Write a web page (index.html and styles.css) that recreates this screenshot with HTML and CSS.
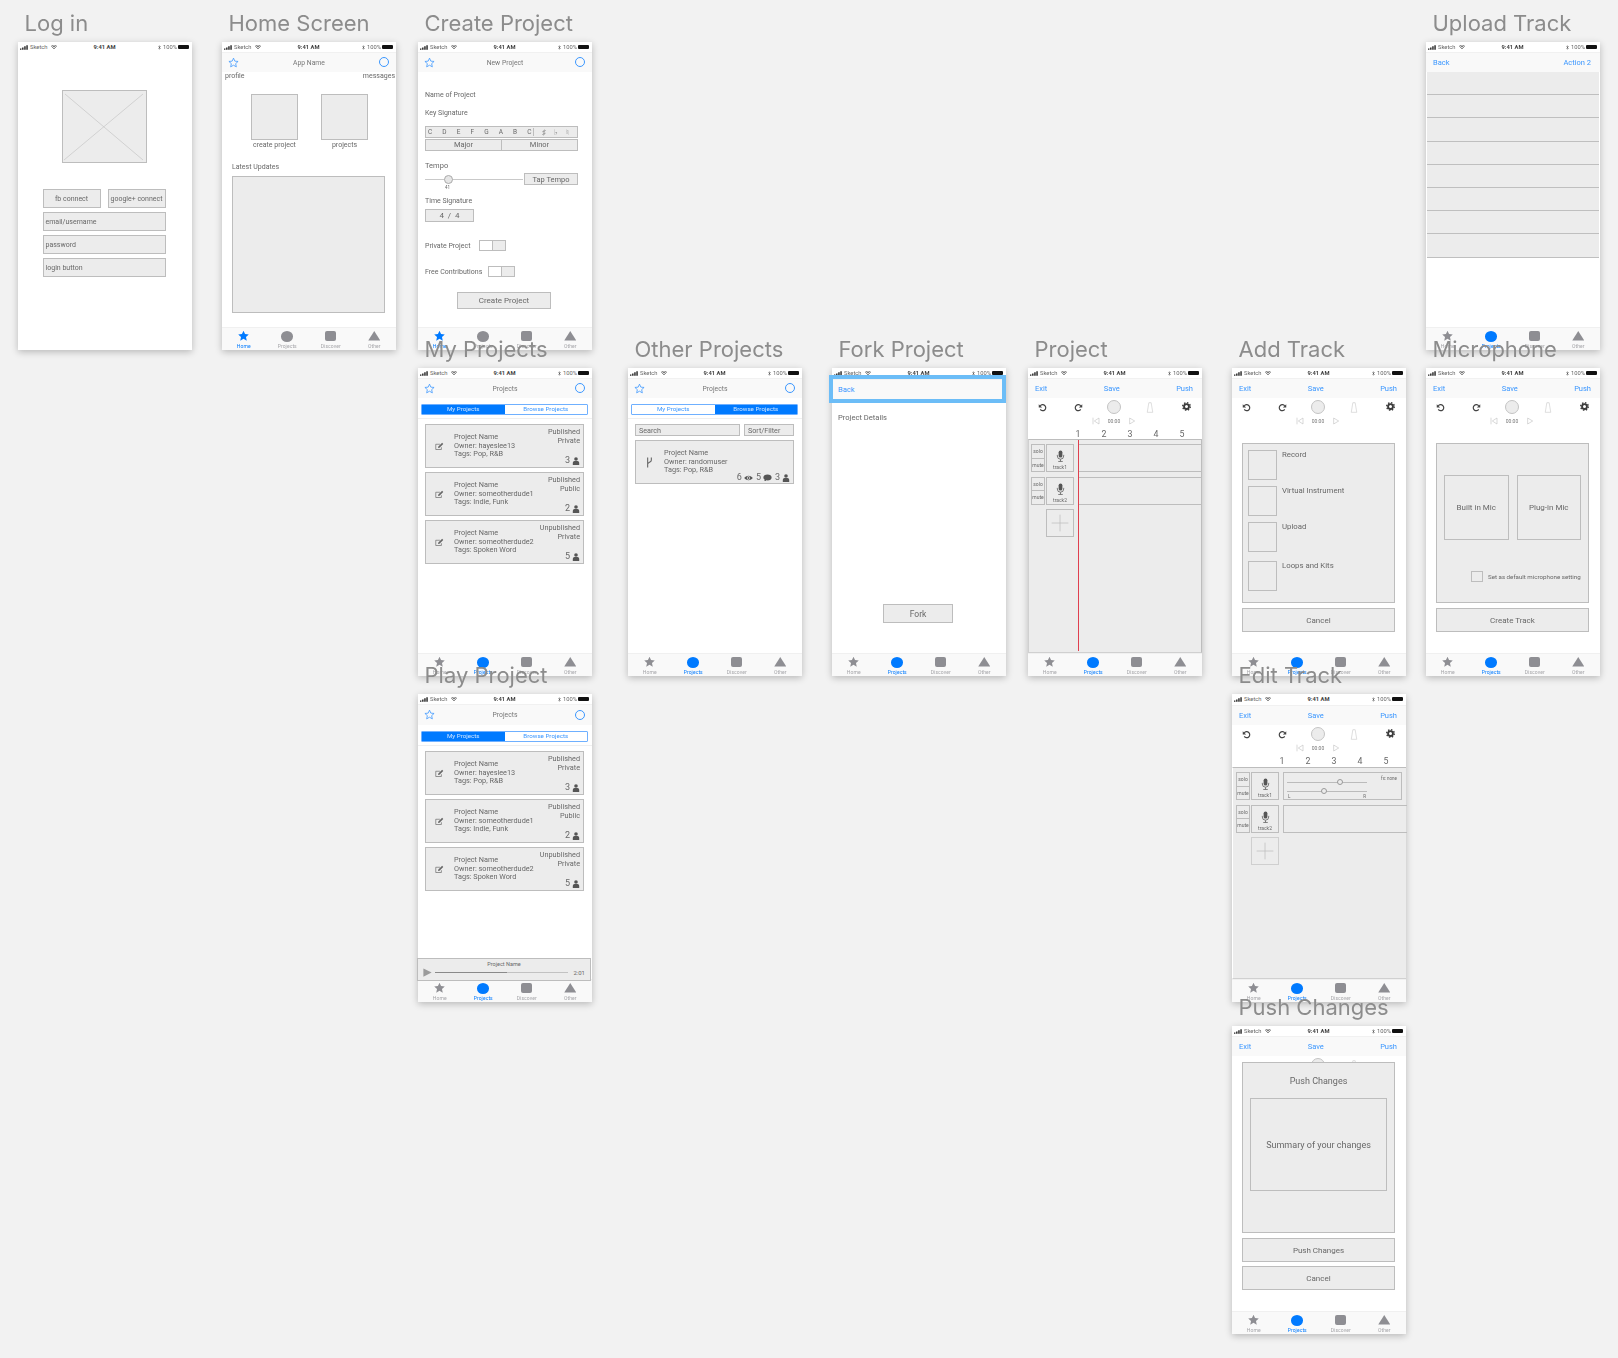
FILE: index.html
```html
<!DOCTYPE html>
<html lang="en">
<head>
  <meta charset="UTF-8">
  <title>Wireframes</title>
  <link rel="stylesheet" href="styles.css">
</head>
<body>
  <svg class="sprite" aria-hidden="true">
    <symbol id="signal" viewBox="0 0 17 10"><path d="M0 7h3v3H0zM4.500 5h3v5h-3zM9 2.500h3V10H9zM13.500 0h3v10h-3z"/></symbol>
    <symbol id="wifi" viewBox="0 0 24 18"><path d="M12 18l-3.500-4a5 5 0 0 1 7 0zM5.800 11a9 9 0 0 1 12.400 0l2-2.200a12 12 0 0 0-16.400 0zM1.500 6.500a15 15 0 0 1 21 0L24 4.500a18 18 0 0 0-24 0z"/></symbol>
    <symbol id="bt" viewBox="0 0 10 16"><path d="M1 4l7 7-3 3V2l3 3-7 7" fill="none" stroke="currentColor" stroke-width="1.600"/></symbol>
    <symbol id="star" viewBox="0 0 24 24"><path d="M12 1.500l3.200 7.100 7.800.8-5.800 5.200 1.600 7.600-6.800-3.900-6.800 3.900 1.600-7.600L1 9.400l7.800-.8z"/></symbol>
    <symbol id="star-line" viewBox="0 0 24 24"><path d="M12 2.500l2.900 6.500 7.100.7-5.300 4.800 1.500 7-6.200-3.600-6.200 3.600 1.500-7L2 9.700 9.100 9z" fill="none" stroke="currentColor" stroke-width="1.700"/></symbol>
    <symbol id="undo" viewBox="0 0 24 24"><path d="M6 8a8 8 0 1 1 0 9" fill="none" stroke="currentColor" stroke-width="3.200"/><path d="M2 3v9h9z"/></symbol>
    <symbol id="redo" viewBox="0 0 24 24"><path d="M18 8a8 8 0 1 0 0 9" fill="none" stroke="currentColor" stroke-width="3.200"/><path d="M22 3v9h-9z"/></symbol>
    <symbol id="gear" viewBox="0 0 24 24"><circle cx="12" cy="12" r="6.500" fill="none" stroke="currentColor" stroke-width="5"/><circle cx="12" cy="12" r="10" fill="none" stroke="currentColor" stroke-width="4" stroke-dasharray="3.800 4.050"/></symbol>
    <symbol id="bell" viewBox="0 0 14 24"><path d="M4.500 1.500h5L13 22.500H1z" fill="none" stroke="currentColor" stroke-width="1.200"/></symbol>
    <symbol id="prev" viewBox="0 0 24 24"><path d="M3 2v20M21 3v18L7 12z" fill="none" stroke="currentColor" stroke-width="1.800"/></symbol>
    <symbol id="next" viewBox="0 0 24 24"><path d="M5 3v18l15-9z" fill="none" stroke="currentColor" stroke-width="1.800"/></symbol>
    <symbol id="mic" viewBox="0 0 24 32"><rect x="7" y="1" width="10" height="19" rx="5"/><path d="M3.500 13v3a8.500 8.500 0 0 0 17 0v-3M12 25v5M6 30.500h12" fill="none" stroke="currentColor" stroke-width="2"/></symbol>
    <symbol id="plus" viewBox="0 0 28 28"><path d="M14 5v18M5 14h18" fill="none" stroke="currentColor" stroke-width=".8"/></symbol>
    <symbol id="user" viewBox="0 0 20 20"><circle cx="10" cy="5" r="4.500"/><path d="M2 20v-5c0-3 2-5 4-5h8c2 0 4 2 4 5v5z"/></symbol>
    <symbol id="eye" viewBox="0 0 26 18"><path fill-rule="evenodd" d="M13 2c6 0 10 4 13 7-3 3-7 7-13 7S3 12 0 9c3-3 7-7 13-7zm0 2a5 5 0 1 0 0 10 5 5 0 0 0 0-10z"/><circle cx="13" cy="9" r="3"/></symbol>
    <symbol id="comment" viewBox="0 0 24 20"><path d="M12 1c6.500 0 11 3.500 11 8s-4.500 8-11 8c-1 0-2 0-3-.3C7.500 18 5 19.500 2.500 19.500c1.500-1.500 2-3 2-4.500C2.500 13.500 1 11.500 1 9c0-4.500 4.500-8 11-8z"/></symbol>
    <symbol id="edit" viewBox="0 0 24 22"><path d="M17 13v6H2V5h11" fill="none" stroke="currentColor" stroke-width="1.800"/><path d="M8 15l1-4L19 1l3 3-10 10z"/></symbol>
    <symbol id="fork" viewBox="0 0 14 24"><path d="M3 1v22M11 1v6c0 5-8 4-8 9" fill="none" stroke="currentColor" stroke-width="2.400"/></symbol>
    <symbol id="play" viewBox="0 0 24 24"><path d="M1 1l22 11L1 23z"/></symbol>
  </svg>

  <div class="canvas">

    <!-- Log in -->
    <section class="board b-login">
      <h2 class="title">Log in</h2>
      <div class="screen">
        <div class="status"><span class="st-left"><svg class="i-signal"><use href="#signal"/></svg>Sketch<svg class="i-wifi"><use href="#wifi"/></svg></span><span class="st-time">9:41 AM</span><span class="st-right"><svg class="i-bt"><use href="#bt"/></svg>100%<i class="batt"></i></span></div>
        <div class="body login">
          <svg class="placeholder" viewBox="0 0 85 73"><rect x=".5" y=".5" width="84" height="72"/><path d="M3 4l78 66M81 4L2 70"/></svg>
          <div class="login-pair">
            <div class="box login-btn center">fb connect</div>
            <div class="box login-btn center">google+ connect</div>
          </div>
          <div class="box login-row">email/username</div>
          <div class="box login-row">password</div>
          <div class="box login-row">login button</div>
        </div>
      </div>
    </section>

    <!-- Home Screen -->
    <section class="board b-home">
      <h2 class="title">Home Screen</h2>
      <div class="screen">
        <div class="status"><span class="st-left"><svg class="i-signal"><use href="#signal"/></svg>Sketch<svg class="i-wifi"><use href="#wifi"/></svg></span><span class="st-time">9:41 AM</span><span class="st-right"><svg class="i-bt"><use href="#bt"/></svg>100%<i class="batt"></i></span></div>
        <div class="nav"><svg class="nav-star"><use href="#star-line"/></svg><span class="nav-title">App Name</span><i class="nav-circle"></i></div>
        <div class="body home">
          <div class="home-caps"><span>profile</span><span>messages</span></div>
          <div class="home-tiles">
            <div class="home-tile"><div class="box tile-square"></div>create project</div>
            <div class="home-tile"><div class="box tile-square"></div>projects</div>
          </div>
          <div class="home-label">Latest Updates</div>
          <div class="box home-panel"></div>
        </div>
        <div class="tabs">
          <div class="tab on"><svg class="t-star"><use href="#star"/></svg>Home</div>
          <div class="tab"><i class="t-circle"></i>Projects</div>
          <div class="tab"><i class="t-square"></i>Discover</div>
          <div class="tab"><i class="t-tri"></i>Other</div>
        </div>
      </div>
    </section>

    <!-- Create Project -->
    <section class="board b-create">
      <h2 class="title">Create Project</h2>
      <div class="screen">
        <div class="status"><span class="st-left"><svg class="i-signal"><use href="#signal"/></svg>Sketch<svg class="i-wifi"><use href="#wifi"/></svg></span><span class="st-time">9:41 AM</span><span class="st-right"><svg class="i-bt"><use href="#bt"/></svg>100%<i class="batt"></i></span></div>
        <div class="nav"><svg class="nav-star"><use href="#star-line"/></svg><span class="nav-title">New Project</span><i class="nav-circle"></i></div>
        <div class="body create">
          <div class="cr-label cr-name">Name of Project</div>
          <div class="cr-label cr-key">Key Signature</div>
          <div class="box keys">
            <div class="keys-notes"><span>C</span><span>D</span><span>E</span><span>F</span><span>G</span><span>A</span><span>B</span><span>C</span></div>
            <div class="keys-acc"><span>♯</span><span>♭</span><span>♮</span></div>
          </div>
          <div class="box mode"><span>Major</span><span>Minor</span></div>
          <div class="cr-label cr-tempo">Tempo</div>
          <div class="tempo-row">
            <div class="slider tempo-slider"><i class="knob"></i><span class="tempo-val">41</span></div>
            <div class="box tap center">Tap Tempo</div>
          </div>
          <div class="cr-label cr-time">Time Signature</div>
          <div class="box timesig center">4&nbsp;&nbsp;/&nbsp;&nbsp;4</div>
          <div class="cr-toggle cr-private">Private Project<span class="toggle"><i></i><b></b></span></div>
          <div class="cr-toggle cr-free">Free Contributions<span class="toggle"><i></i><b></b></span></div>
          <div class="box cr-submit center">Create Project</div>
        </div>
        <div class="tabs">
          <div class="tab on"><svg class="t-star"><use href="#star"/></svg>Home</div>
          <div class="tab"><i class="t-circle"></i>Projects</div>
          <div class="tab"><i class="t-square"></i>Discover</div>
          <div class="tab"><i class="t-tri"></i>Other</div>
        </div>
      </div>
    </section>

    <!-- Upload Track -->
    <section class="board b-upload">
      <h2 class="title">Upload Track</h2>
      <div class="screen">
        <div class="status"><span class="st-left"><svg class="i-signal"><use href="#signal"/></svg>Sketch<svg class="i-wifi"><use href="#wifi"/></svg></span><span class="st-time">9:41 AM</span><span class="st-right"><svg class="i-bt"><use href="#bt"/></svg>100%<i class="batt"></i></span></div>
        <div class="nav nav-links"><span>Back</span><span>Action 2</span></div>
        <div class="body upload">
          <div class="up-row"></div><div class="up-row"></div><div class="up-row"></div><div class="up-row"></div>
          <div class="up-row"></div><div class="up-row"></div><div class="up-row"></div><div class="up-row"></div>
        </div>
        <div class="tabs">
          <div class="tab"><svg class="t-star"><use href="#star"/></svg>Home</div>
          <div class="tab on"><i class="t-circle"></i>Projects</div>
          <div class="tab"><i class="t-square"></i>Discover</div>
          <div class="tab"><i class="t-tri"></i>Other</div>
        </div>
      </div>
    </section>

    <!-- My Projects -->
    <section class="board b-mine">
      <h2 class="title">My Projects</h2>
      <div class="screen">
        <div class="status"><span class="st-left"><svg class="i-signal"><use href="#signal"/></svg>Sketch<svg class="i-wifi"><use href="#wifi"/></svg></span><span class="st-time">9:41 AM</span><span class="st-right"><svg class="i-bt"><use href="#bt"/></svg>100%<i class="batt"></i></span></div>
        <div class="nav"><svg class="nav-star"><use href="#star-line"/></svg><span class="nav-title">Projects</span><i class="nav-circle"></i></div>
        <div class="seg-bar"><div class="seg"><span class="on">My Projects</span><span>Browse Projects</span></div></div>
        <div class="body cards">
          <div class="box card">
            <svg class="card-icon"><use href="#edit"/></svg>
            <div class="card-info">Project Name<br>Owner: hayeslee13<br>Tags: Pop, R&amp;B</div>
            <div class="card-side"><div>Published<br>Private</div><div class="card-stats">3<svg class="i-user"><use href="#user"/></svg></div></div>
          </div>
          <div class="box card">
            <svg class="card-icon"><use href="#edit"/></svg>
            <div class="card-info">Project Name<br>Owner: someotherdude1<br>Tags: Indie, Funk</div>
            <div class="card-side"><div>Published<br>Public</div><div class="card-stats">2<svg class="i-user"><use href="#user"/></svg></div></div>
          </div>
          <div class="box card">
            <svg class="card-icon"><use href="#edit"/></svg>
            <div class="card-info">Project Name<br>Owner: someotherdude2<br>Tags: Spoken Word</div>
            <div class="card-side"><div>Unpublished<br>Private</div><div class="card-stats">5<svg class="i-user"><use href="#user"/></svg></div></div>
          </div>
        </div>
        <div class="tabs">
          <div class="tab"><svg class="t-star"><use href="#star"/></svg>Home</div>
          <div class="tab on"><i class="t-circle"></i>Projects</div>
          <div class="tab"><i class="t-square"></i>Discover</div>
          <div class="tab"><i class="t-tri"></i>Other</div>
        </div>
      </div>
    </section>

    <!-- Other Projects -->
    <section class="board b-other">
      <h2 class="title">Other Projects</h2>
      <div class="screen">
        <div class="status"><span class="st-left"><svg class="i-signal"><use href="#signal"/></svg>Sketch<svg class="i-wifi"><use href="#wifi"/></svg></span><span class="st-time">9:41 AM</span><span class="st-right"><svg class="i-bt"><use href="#bt"/></svg>100%<i class="batt"></i></span></div>
        <div class="nav"><svg class="nav-star"><use href="#star-line"/></svg><span class="nav-title">Projects</span><i class="nav-circle"></i></div>
        <div class="seg-bar"><div class="seg"><span>My Projects</span><span class="on">Browse Projects</span></div></div>
        <div class="body cards">
          <div class="search-row"><div class="box search">Search</div><div class="box sort">Sort/Filter</div></div>
          <div class="box card">
            <svg class="card-icon icon-fork"><use href="#fork"/></svg>
            <div class="card-info">Project Name<br>Owner: randomuser<br>Tags: Pop, R&amp;B</div>
            <div class="card-side card-side-end"><div class="card-stats">6<svg class="i-eye"><use href="#eye"/></svg>5<svg class="i-comment"><use href="#comment"/></svg>3<svg class="i-user"><use href="#user"/></svg></div></div>
          </div>
        </div>
        <div class="tabs">
          <div class="tab"><svg class="t-star"><use href="#star"/></svg>Home</div>
          <div class="tab on"><i class="t-circle"></i>Projects</div>
          <div class="tab"><i class="t-square"></i>Discover</div>
          <div class="tab"><i class="t-tri"></i>Other</div>
        </div>
      </div>
    </section>

    <!-- Fork Project -->
    <section class="board b-fork">
      <h2 class="title">Fork Project</h2>
      <div class="screen">
        <div class="status"><span class="st-left"><svg class="i-signal"><use href="#signal"/></svg>Sketch<svg class="i-wifi"><use href="#wifi"/></svg></span><span class="st-time">9:41 AM</span><span class="st-right"><svg class="i-bt"><use href="#bt"/></svg>100%<i class="batt"></i></span></div>
        <div class="nav nav-links nav-selected"><span>Back</span></div>
        <div class="body fork">
          <div class="fork-details">Project Details</div>
          <div class="box fork-btn center">Fork</div>
        </div>
        <div class="tabs">
          <div class="tab"><svg class="t-star"><use href="#star"/></svg>Home</div>
          <div class="tab on"><i class="t-circle"></i>Projects</div>
          <div class="tab"><i class="t-square"></i>Discover</div>
          <div class="tab"><i class="t-tri"></i>Other</div>
        </div>
      </div>
    </section>

    <!-- Project -->
    <section class="board b-project">
      <h2 class="title">Project</h2>
      <div class="screen">
        <div class="status"><span class="st-left"><svg class="i-signal"><use href="#signal"/></svg>Sketch<svg class="i-wifi"><use href="#wifi"/></svg></span><span class="st-time">9:41 AM</span><span class="st-right"><svg class="i-bt"><use href="#bt"/></svg>100%<i class="batt"></i></span></div>
        <div class="nav nav-links"><span>Exit</span><span>Save</span><span>Push</span></div>
        <div class="tools">
          <svg class="t-undo"><use href="#undo"/></svg><svg class="t-undo"><use href="#redo"/></svg><i class="t-record"></i><svg class="t-bell"><use href="#bell"/></svg><svg class="t-gear"><use href="#gear"/></svg>
        </div>
        <div class="transport"><svg><use href="#prev"/></svg><span>00:00</span><svg><use href="#next"/></svg></div>
        <div class="ruler"><span>1</span><span>2</span><span>3</span><span>4</span><span>5</span></div>
        <div class="timeline">
          <div class="playhead"></div>
          <div class="track">
            <div class="sm"><span>solo</span><span>mute</span></div>
            <div class="trk"><svg><use href="#mic"/></svg>track1</div>
            <div class="clip"></div>
          </div>
          <div class="track">
            <div class="sm"><span>solo</span><span>mute</span></div>
            <div class="trk"><svg><use href="#mic"/></svg>track2</div>
            <div class="clip"></div>
          </div>
          <div class="add-track"><svg><use href="#plus"/></svg></div>
        </div>
        <div class="tabs">
          <div class="tab"><svg class="t-star"><use href="#star"/></svg>Home</div>
          <div class="tab on"><i class="t-circle"></i>Projects</div>
          <div class="tab"><i class="t-square"></i>Discover</div>
          <div class="tab"><i class="t-tri"></i>Other</div>
        </div>
      </div>
    </section>

    <!-- Add Track -->
    <section class="board b-add">
      <h2 class="title">Add Track</h2>
      <div class="screen">
        <div class="status"><span class="st-left"><svg class="i-signal"><use href="#signal"/></svg>Sketch<svg class="i-wifi"><use href="#wifi"/></svg></span><span class="st-time">9:41 AM</span><span class="st-right"><svg class="i-bt"><use href="#bt"/></svg>100%<i class="batt"></i></span></div>
        <div class="nav nav-links"><span>Exit</span><span>Save</span><span>Push</span></div>
        <div class="tools">
          <svg class="t-undo"><use href="#undo"/></svg><svg class="t-undo"><use href="#redo"/></svg><i class="t-record"></i><svg class="t-bell"><use href="#bell"/></svg><svg class="t-gear"><use href="#gear"/></svg>
        </div>
        <div class="transport"><svg><use href="#prev"/></svg><span>00:00</span><svg><use href="#next"/></svg></div>
        <div class="body sheet">
          <div class="box sheet-panel add-list">
            <div class="add-item add-a"><div class="box add-thumb"></div>Record</div>
            <div class="add-item add-b"><div class="box add-thumb"></div>Virtual Instrument</div>
            <div class="add-item add-c"><div class="box add-thumb"></div>Upload</div>
            <div class="add-item add-d"><div class="box add-thumb"></div>Loops and Kits</div>
          </div>
          <div class="box sheet-btn center">Cancel</div>
        </div>
        <div class="tabs">
          <div class="tab"><svg class="t-star"><use href="#star"/></svg>Home</div>
          <div class="tab on"><i class="t-circle"></i>Projects</div>
          <div class="tab"><i class="t-square"></i>Discover</div>
          <div class="tab"><i class="t-tri"></i>Other</div>
        </div>
      </div>
    </section>

    <!-- Microphone -->
    <section class="board b-mic">
      <h2 class="title">Microphone</h2>
      <div class="screen">
        <div class="status"><span class="st-left"><svg class="i-signal"><use href="#signal"/></svg>Sketch<svg class="i-wifi"><use href="#wifi"/></svg></span><span class="st-time">9:41 AM</span><span class="st-right"><svg class="i-bt"><use href="#bt"/></svg>100%<i class="batt"></i></span></div>
        <div class="nav nav-links"><span>Exit</span><span>Save</span><span>Push</span></div>
        <div class="tools">
          <svg class="t-undo"><use href="#undo"/></svg><svg class="t-undo"><use href="#redo"/></svg><i class="t-record"></i><svg class="t-bell"><use href="#bell"/></svg><svg class="t-gear"><use href="#gear"/></svg>
        </div>
        <div class="transport"><svg><use href="#prev"/></svg><span>00:00</span><svg><use href="#next"/></svg></div>
        <div class="body sheet">
          <div class="box sheet-panel mic-panel">
            <div class="mic-choices"><div class="box mic-choice center">Built in Mic</div><div class="box mic-choice center">Plug-in Mic</div></div>
            <div class="mic-default"><i class="box mic-check"></i>Set as default microphone setting</div>
          </div>
          <div class="box sheet-btn center">Create Track</div>
        </div>
        <div class="tabs">
          <div class="tab"><svg class="t-star"><use href="#star"/></svg>Home</div>
          <div class="tab on"><i class="t-circle"></i>Projects</div>
          <div class="tab"><i class="t-square"></i>Discover</div>
          <div class="tab"><i class="t-tri"></i>Other</div>
        </div>
      </div>
    </section>

    <!-- Play Project -->
    <section class="board b-play">
      <h2 class="title">Play Project</h2>
      <div class="screen">
        <div class="status"><span class="st-left"><svg class="i-signal"><use href="#signal"/></svg>Sketch<svg class="i-wifi"><use href="#wifi"/></svg></span><span class="st-time">9:41 AM</span><span class="st-right"><svg class="i-bt"><use href="#bt"/></svg>100%<i class="batt"></i></span></div>
        <div class="nav"><svg class="nav-star"><use href="#star-line"/></svg><span class="nav-title">Projects</span><i class="nav-circle"></i></div>
        <div class="seg-bar"><div class="seg"><span class="on">My Projects</span><span>Browse Projects</span></div></div>
        <div class="body cards">
          <div class="box card">
            <svg class="card-icon"><use href="#edit"/></svg>
            <div class="card-info">Project Name<br>Owner: hayeslee13<br>Tags: Pop, R&amp;B</div>
            <div class="card-side"><div>Published<br>Private</div><div class="card-stats">3<svg class="i-user"><use href="#user"/></svg></div></div>
          </div>
          <div class="box card">
            <svg class="card-icon"><use href="#edit"/></svg>
            <div class="card-info">Project Name<br>Owner: someotherdude1<br>Tags: Indie, Funk</div>
            <div class="card-side"><div>Published<br>Public</div><div class="card-stats">2<svg class="i-user"><use href="#user"/></svg></div></div>
          </div>
          <div class="box card">
            <svg class="card-icon"><use href="#edit"/></svg>
            <div class="card-info">Project Name<br>Owner: someotherdude2<br>Tags: Spoken Word</div>
            <div class="card-side"><div>Unpublished<br>Private</div><div class="card-stats">5<svg class="i-user"><use href="#user"/></svg></div></div>
          </div>
        </div>
        <div class="player">
          <div class="player-name">Project Name</div>
          <div class="player-row"><svg class="player-play"><use href="#play"/></svg><div class="player-line"><i></i></div><span>2:01</span></div>
        </div>
        <div class="tabs">
          <div class="tab"><svg class="t-star"><use href="#star"/></svg>Home</div>
          <div class="tab on"><i class="t-circle"></i>Projects</div>
          <div class="tab"><i class="t-square"></i>Discover</div>
          <div class="tab"><i class="t-tri"></i>Other</div>
        </div>
      </div>
    </section>

    <!-- Edit Track -->
    <section class="board b-edit">
      <h2 class="title">Edit Track</h2>
      <div class="screen">
        <div class="status"><span class="st-left"><svg class="i-signal"><use href="#signal"/></svg>Sketch<svg class="i-wifi"><use href="#wifi"/></svg></span><span class="st-time">9:41 AM</span><span class="st-right"><svg class="i-bt"><use href="#bt"/></svg>100%<i class="batt"></i></span></div>
        <div class="nav nav-links"><span>Exit</span><span>Save</span><span>Push</span></div>
        <div class="tools">
          <svg class="t-undo"><use href="#undo"/></svg><svg class="t-undo"><use href="#redo"/></svg><i class="t-record"></i><svg class="t-bell"><use href="#bell"/></svg><svg class="t-gear"><use href="#gear"/></svg>
        </div>
        <div class="transport"><svg><use href="#prev"/></svg><span>00:00</span><svg><use href="#next"/></svg></div>
        <div class="ruler"><span>1</span><span>2</span><span>3</span><span>4</span><span>5</span></div>
        <div class="timeline timeline-edit">
          <div class="track">
            <div class="sm"><span>solo</span><span>mute</span></div>
            <div class="trk"><svg><use href="#mic"/></svg>track1</div>
            <div class="clip clip-open">
              <span class="fx">fx: none</span>
              <div class="slider clip-slider clip-vol"><i class="knob"></i></div>
              <div class="slider clip-slider clip-pan"><i class="knob"></i></div>
              <div class="pan-labels"><span>L</span><span>R</span></div>
            </div>
          </div>
          <div class="track">
            <div class="sm"><span>solo</span><span>mute</span></div>
            <div class="trk"><svg><use href="#mic"/></svg>track2</div>
            <div class="clip"></div>
          </div>
          <div class="add-track"><svg><use href="#plus"/></svg></div>
        </div>
        <div class="tabs">
          <div class="tab"><svg class="t-star"><use href="#star"/></svg>Home</div>
          <div class="tab on"><i class="t-circle"></i>Projects</div>
          <div class="tab"><i class="t-square"></i>Discover</div>
          <div class="tab"><i class="t-tri"></i>Other</div>
        </div>
      </div>
    </section>

    <!-- Push Changes -->
    <section class="board b-push">
      <h2 class="title">Push Changes</h2>
      <div class="screen">
        <div class="status"><span class="st-left"><svg class="i-signal"><use href="#signal"/></svg>Sketch<svg class="i-wifi"><use href="#wifi"/></svg></span><span class="st-time">9:41 AM</span><span class="st-right"><svg class="i-bt"><use href="#bt"/></svg>100%<i class="batt"></i></span></div>
        <div class="nav nav-links"><span>Exit</span><span>Save</span><span>Push</span></div>
        <div class="tools">
          <svg class="t-undo"><use href="#undo"/></svg><svg class="t-undo"><use href="#redo"/></svg><i class="t-record"></i><svg class="t-bell"><use href="#bell"/></svg><svg class="t-gear"><use href="#gear"/></svg>
        </div>
        <div class="body"></div>
        <div class="push-sheet">
          <div class="box sheet-panel push-panel">
            <div class="push-head">Push Changes</div>
            <div class="box push-summary center">Summary of your changes</div>
          </div>
          <div class="box sheet-btn center">Push Changes</div>
          <div class="box sheet-btn center">Cancel</div>
        </div>
        <div class="tabs">
          <div class="tab"><svg class="t-star"><use href="#star"/></svg>Home</div>
          <div class="tab on"><i class="t-circle"></i>Projects</div>
          <div class="tab"><i class="t-square"></i>Discover</div>
          <div class="tab"><i class="t-tri"></i>Other</div>
        </div>
      </div>
    </section>

  </div>
</body>
</html>
```

FILE: styles.css
```css
:root {
  --canvas: #f2f2f2;
  --wire: #ececec;
  --wire-line: #bdbdbd;
  --text: #686868;
  --blue: #007aff;
  --link: #3b97ff;
  --bar: #f9f9f9;
  --tab-gray: #8e8e93;
}

* {
  box-sizing: border-box;
  margin: 0;
  padding: 0;
}

html,
body {
  width: 1618px;
  height: 1358px;
  overflow: hidden;
  background: var(--canvas);
}

body {
  font-family: Roboto, "Liberation Sans", sans-serif;
  color: var(--text);
}

.sprite {
  position: absolute;
  width: 0;
  height: 0;
}

svg {
  fill: currentColor;
  display: block;
}

i {
  display: block;
  font-style: normal;
}

/* free canvas of artboards */
.canvas {
  position: relative;
  width: 1618px;
  height: 1358px;
  filter: blur(0.4px);
}

.board {
  position: absolute;
  width: 174px;
  height: 308px;
}

.b-login { left: 18px; top: 42px; }
.b-home { left: 222px; top: 42px; }
.b-create { left: 418px; top: 42px; }
.b-upload { left: 1426px; top: 42px; }
.b-mine { left: 418px; top: 368px; }
.b-other { left: 628px; top: 368px; }
.b-fork { left: 832px; top: 368px; }
.b-project { left: 1028px; top: 368px; }
.b-add { left: 1232px; top: 368px; }
.b-mic { left: 1426px; top: 368px; }
.b-play { left: 418px; top: 694px; }
.b-edit { left: 1232px; top: 694px; }
.b-push { left: 1232px; top: 1026px; }

.title {
  position: absolute;
  left: 6.500px;
  bottom: 100%;
  margin-bottom: 6px;
  z-index: 3;
  font-family: Inter, "Open Sans", sans-serif;
  font-size: 22px;
  line-height: 26px;
  font-weight: 400;
  white-space: nowrap;
  color: #8c8c8c;
}

.screen {
  position: relative;
  display: flex;
  flex-direction: column;
  width: 174px;
  height: 308px;
  background: #fff;
  box-shadow: 0 2px 7px rgba(0, 0, 0, 0.24);
}

/* status bar */
.status {
  display: grid;
  grid-template-columns: 1fr auto 1fr;
  align-items: center;
  flex: none;
  height: 10px;
  padding: 0 3px 0 2px;
  background: #fff;
  font-size: 5.800px;
  color: #666;
}

.st-left,
.st-right {
  display: flex;
  align-items: center;
}

.st-right {
  justify-content: flex-end;
}

.st-time {
  font-weight: 700;
  color: #444;
}

.i-signal {
  width: 8px;
  height: 5px;
  margin-right: 2px;
  color: #222;
}

.i-wifi {
  width: 6px;
  height: 4.500px;
  margin-left: 3px;
  color: #333;
}

.i-bt {
  width: 3px;
  height: 5px;
  margin-right: 2px;
  color: #444;
}

.batt {
  width: 11px;
  height: 4px;
  margin-left: 1px;
  background: #111;
  border-radius: 1px;
}

/* nav bar */
.nav {
  display: flex;
  align-items: center;
  justify-content: space-between;
  flex: none;
  height: 20px;
  padding: 0 7px 0 6px;
  background: var(--bar);
  border-top: 1px solid #f1f1f1;
}

.nav-star {
  width: 11px;
  height: 11px;
  margin-top: -1px;
  color: var(--link);
}

.nav-title {
  font-size: 6.800px;
  color: #777;
}

.nav-circle {
  width: 10px;
  height: 10px;
  margin-top: -1px;
  border: 1px solid var(--link);
  border-radius: 50%;
}

.nav-links {
  padding: 0 9px 0 7px;
  font-size: 7.500px;
  color: var(--link);
}

.nav-selected {
  position: relative;
  z-index: 1;
  margin: 1px 4px 0 1px;
  padding-left: 5px;
  outline: 4px solid #6cbdf7;
}

.b-edit .nav {
  margin-top: 1px;
}

.b-play .nav {
  height: 21px;
}

/* tab bar */
.tabs {
  display: flex;
  flex: none;
  height: 23px;
  background: var(--bar);
  border-top: 1px solid #f0f0f0;
}

.tab {
  flex: 1;
  position: relative;
  display: flex;
  flex-direction: column;
  align-items: center;
  padding-top: 2px;
  font-size: 5px;
  letter-spacing: 0.1px;
  line-height: 7px;
  color: #a4a4a8;
}

.tab.on {
  color: var(--blue);
}

.t-star {
  width: 13px;
  height: 13px;
  margin-bottom: 1.500px;
  color: var(--tab-gray);
}

.t-circle {
  width: 12px;
  height: 12px;
  margin: 1px 0 1.500px;
  border-radius: 50%;
  background: var(--tab-gray);
}

.t-square {
  width: 11px;
  height: 11px;
  margin: 1px 0 2.500px;
  border-radius: 2px;
  background: var(--tab-gray);
}

.t-tri {
  width: 12px;
  height: 11px;
  margin: 1px 0 2.500px;
  background: var(--tab-gray);
  clip-path: polygon(50% 0, 100% 100%, 0 100%);
}

.tab.on .t-star {
  color: var(--blue);
}

.tab.on .t-circle {
  background: var(--blue);
}

/* shared wire box */
.box {
  background: var(--wire);
  border: 1px solid var(--wire-line);
}

.center {
  display: flex;
  align-items: center;
  justify-content: center;
}

.body {
  flex: 1;
  min-height: 0;
}

/* log in */
.login {
  display: flex;
  flex-direction: column;
  align-items: center;
  padding-right: 2px;
}

.placeholder {
  width: 85px;
  height: 73px;
  margin: 38px 0 26px;
  flex: none;
}

.placeholder rect {
  fill: var(--wire);
  stroke: var(--wire-line);
}

.placeholder path {
  fill: none;
  stroke: #c6c6c6;
  stroke-width: 0.700;
}

.login-pair {
  display: flex;
  gap: 7px;
  margin-bottom: 4px;
}

.login-btn {
  width: 58px;
  height: 19px;
  font-size: 7px;
  white-space: nowrap;
}

.login-row {
  display: flex;
  align-items: center;
  width: 123px;
  height: 19px;
  margin-bottom: 4px;
  padding-left: 2px;
  font-size: 7px;
}

/* home */
.home {
  font-size: 7px;
}

.home-caps {
  display: flex;
  justify-content: space-between;
  padding: 0 1px 0 3px;
  line-height: 8px;
}

.home-tiles {
  display: flex;
  gap: 23px;
  padding: 14px 0 0 29px;
}

.home-tile {
  display: flex;
  flex-direction: column;
  align-items: center;
  gap: 1px;
  width: 47px;
  line-height: 8px;
  white-space: nowrap;
}

.tile-square {
  width: 47px;
  height: 46px;
}

.home-label {
  padding: 14px 0 0 10px;
  line-height: 8px;
}

.home-panel {
  width: 153px;
  height: 137px;
  margin: 5px 0 0 10px;
}

/* create project */
.create {
  padding: 0 14px 0 7px;
  font-size: 7px;
}

.cr-label {
  line-height: 8px;
}

.cr-name {
  padding-top: 19px;
}

.cr-key {
  padding-top: 10px;
}

.keys {
  display: flex;
  align-items: center;
  height: 12px;
  margin-top: 9px;
  font-size: 6.500px;
}

.keys-notes {
  display: flex;
  justify-content: space-between;
  width: 108px;
  padding: 0 1.500px 0 2px;
  border-right: 1px solid var(--wire-line);
}

.keys-acc {
  display: flex;
  justify-content: space-around;
  flex: 1;
  padding: 0 4px;
  font-size: 8px;
  line-height: 9px;
  color: #888;
}

.mode {
  display: flex;
  height: 12px;
  margin-top: 1px;
  font-size: 7.500px;
  line-height: 10px;
  text-align: center;
}

.mode span {
  flex: 1;
}

.mode span + span {
  border-left: 1px solid var(--wire-line);
}

.cr-tempo {
  padding-top: 11px;
  font-size: 7.500px;
}

.tempo-row {
  display: flex;
  align-items: center;
  gap: 1px;
  margin-top: 3px;
}

.slider {
  position: relative;
  height: 1px;
  background: #c9c9c9;
}

.knob {
  position: absolute;
  top: -4px;
  width: 9px;
  height: 9px;
  border: 1px solid #aaa;
  border-radius: 50%;
  background: #e6e6e6;
}

.tempo-slider {
  width: 98px;
}

.tempo-slider .knob {
  left: 19px;
}

.tempo-val {
  position: absolute;
  left: 20px;
  top: 6px;
  font-size: 4.500px;
  line-height: 6px;
}

.tap {
  width: 54px;
  height: 12px;
  font-size: 7.500px;
}

.cr-time {
  padding-top: 12px;
}

.timesig {
  width: 49px;
  height: 13px;
  margin-top: 4px;
  font-size: 8px;
}

.cr-toggle {
  display: flex;
  align-items: center;
  gap: 9px;
  height: 11px;
  white-space: nowrap;
}

.cr-private {
  margin-top: 18px;
}

.cr-free {
  margin-top: 15px;
  gap: 6px;
}

.toggle {
  display: flex;
  width: 27px;
  height: 11px;
  border: 1px solid var(--wire-line);
}

.toggle i {
  flex: 1;
  background: #fff;
  border-right: 1px solid var(--wire-line);
}

.toggle b {
  flex: 1;
  background: var(--wire);
}

.cr-submit {
  width: 94px;
  height: 17px;
  margin: 15px 0 0 32px;
  font-size: 8px;
}

/* upload track */
.nav-links span {
  line-height: 1;
}

.upload {
  padding: 0 1px;
}

.up-row {
  height: 23.200px;
  background: var(--wire);
  border-bottom: 1.500px solid #bfbfbf;
}

/* segmented control + project cards */
.seg-bar {
  flex: none;
  height: 21px;
  padding: 6px 4px 0 3px;
  border-bottom: 1px solid #efefef;
}

.seg {
  display: flex;
  height: 11px;
  border: 1px solid #6fb0ff;
  border-radius: 1px;
  font-size: 6.200px;
  line-height: 9px;
  text-align: center;
  color: var(--link);
}

.seg span {
  flex: 1;
}

.seg .on {
  background: var(--blue);
  color: #cfe5ff;
}

.cards {
  display: flex;
  flex-direction: column;
  gap: 4px;
  padding: 5px 8px 0 7px;
}

.card {
  display: flex;
  align-items: center;
  height: 44px;
  padding: 0 3px 0 9px;
  font-size: 7.300px;
  line-height: 8.800px;
}

.card-icon {
  flex: none;
  width: 9px;
  height: 9px;
  color: #666;
}

.icon-fork {
  width: 7px;
  height: 11px;
  margin-left: 1px;
  margin-right: 1px;
}

.card-info {
  margin-left: 10px;
  white-space: nowrap;
}

.card-side {
  display: flex;
  flex-direction: column;
  justify-content: space-between;
  align-self: stretch;
  margin-left: auto;
  padding: 3px 0 2px;
  text-align: right;
  white-space: nowrap;
}

.card-side-end {
  justify-content: flex-end;
  padding-bottom: 1px;
}

.card-stats {
  display: flex;
  align-items: center;
  justify-content: flex-end;
  gap: 2px;
  font-size: 9px;
  line-height: 9px;
}

.i-user {
  width: 8px;
  height: 8px;
  color: #555;
}

.i-eye {
  width: 9px;
  height: 6px;
  margin-right: 1px;
  color: #555;
}

.i-comment {
  width: 9px;
  height: 7.500px;
  margin-right: 1px;
  color: #555;
}

.search-row {
  display: flex;
  gap: 4px;
  margin-bottom: 0;
  font-size: 7.200px;
}

.search,
.sort {
  display: flex;
  align-items: center;
  height: 12px;
  padding-left: 3px;
}

.search {
  width: 105px;
}

.sort {
  width: 50px;
}

/* fork */
.fork {
  padding: 14px 0 0 6px;
}

.fork-details {
  font-size: 7.600px;
  line-height: 10px;
}

.fork-btn {
  width: 70px;
  height: 19px;
  margin: 181px 0 0 45px;
  font-size: 8.500px;
}

/* editor toolbar */
.tools {
  display: grid;
  grid-template-columns: repeat(5, 36px);
  justify-content: center;
  justify-items: center;
  align-items: center;
  flex: none;
  height: 17px;
  padding-right: 2px;
  color: #444;
}

.t-undo {
  width: 9px;
  height: 9px;
  margin-top: 2px;
}

.t-record {
  width: 14px;
  height: 14px;
  border: 1px solid #c4c4c4;
  border-radius: 50%;
  background: var(--wire);
}

.t-bell {
  width: 8px;
  height: 11px;
  margin-top: 2px;
  color: #c4c4c4;
}

.t-gear {
  width: 9px;
  height: 9px;
  color: #3c3c3c;
}

.b-push .t-gear {
  margin-top: 5px;
}

.transport {
  display: flex;
  align-items: center;
  justify-content: center;
  gap: 8px;
  flex: none;
  height: 11px;
  padding-right: 2px;
  font-size: 5px;
  color: #777;
}

.transport svg {
  width: 8px;
  height: 8px;
  color: #c0c0c0;
}

.ruler {
  display: flex;
  flex: none;
  height: 9px;
  margin-top: 4px;
  padding-left: 37px;
  font-size: 8.800px;
  line-height: 9px;
}

.ruler span {
  width: 26px;
  text-align: center;
}

.timeline {
  position: relative;
  flex: 1;
  padding: 4px 0 0 2px;
  background: var(--wire);
  border: 1px solid var(--wire-line);
  border-bottom: 1px solid #d0d0d0;
  border-left-color: #d0d0d0;
}

.playhead {
  position: absolute;
  left: 49px;
  top: 0;
  bottom: 1px;
  width: 1px;
  background: #e0404f;
  z-index: 1;
}

.track {
  display: flex;
  height: 28px;
  margin-bottom: 4.500px;
  font-size: 5px;
}

.sm {
  display: flex;
  flex-direction: column;
  flex: none;
  width: 14px;
  margin-right: 1px;
  border: 1px solid var(--wire-line);
}

.sm span {
  flex: 1;
  display: flex;
  align-items: center;
  justify-content: center;
}

.sm span + span {
  border-top: 1px solid var(--wire-line);
}

.trk {
  display: flex;
  flex-direction: column;
  align-items: center;
  justify-content: flex-end;
  flex: none;
  width: 28px;
  margin-right: 4px;
  padding-bottom: 1px;
  line-height: 6px;
  border: 1px solid var(--wire-line);
}

.trk svg {
  width: 9px;
  height: 12px;
  margin-bottom: 2px;
  color: #555;
}

.clip {
  flex: 1;
  margin-right: -1px;
  border: 1px solid var(--wire-line);
  border-right: 0;
}

.add-track {
  width: 28px;
  height: 28px;
  margin-left: 15px;
  border: 1px solid var(--wire-line);
  color: #bdbdbd;
}

.add-track svg {
  width: 26px;
  height: 26px;
}

/* edit track */
.timeline-edit {
  margin-top: 1px;
  padding: 4px 0 0 3px;
  border-left: 1px solid #fff;
  border-right: 0;
}

.timeline-edit .add-track {
  border-color: #cfcfcf;
}

.clip-open {
  position: relative;
  margin-right: 4px;
  border-right: 1px solid var(--wire-line);
}

.fx {
  position: absolute;
  right: 4px;
  top: 3px;
  font-size: 4.500px;
}

.clip-slider {
  position: absolute;
  left: 3px;
  width: 80px;
  background: #bbb;
}

.clip-slider .knob {
  top: -3px;
  width: 6px;
  height: 6px;
  background: var(--wire);
  border-color: #999;
}

.clip-vol {
  top: 9px;
}

.clip-vol .knob {
  left: 50px;
}

.clip-pan {
  top: 18px;
}

.clip-pan .knob {
  left: 34px;
}

.pan-labels {
  position: absolute;
  left: 4px;
  top: 21px;
  display: flex;
  justify-content: space-between;
  width: 78px;
  font-size: 4.500px;
}

/* sheets */
.sheet {
  padding: 17px 11px 0 10px;
}

.sheet-panel {
  font-size: 7.800px;
}

.sheet-btn {
  height: 24px;
  margin-top: 5px;
  font-size: 8px;
}

.sheet-btn + .sheet-btn {
  margin-top: 4px;
}

.add-list {
  height: 160px;
  padding: 6px 0 0 5px;
}

.add-item {
  display: flex;
  gap: 5px;
  line-height: 10px;
}

.add-thumb {
  flex: none;
  width: 29px;
  height: 30px;
}

.add-b,
.add-c {
  margin-top: 6px;
}

.add-d {
  margin-top: 9px;
}

.mic-panel {
  height: 160px;
  padding: 31px 7px 0;
}

.mic-choices {
  display: flex;
  gap: 8px;
}

.mic-choice {
  width: 65px;
  height: 65px;
  font-size: 8px;
}

.mic-default {
  display: flex;
  align-items: center;
  gap: 5px;
  margin: 31px 0 0 27px;
  font-size: 6.200px;
  white-space: nowrap;
}

.mic-check {
  width: 12px;
  height: 11px;
}

/* push changes */
.push-sheet {
  position: absolute;
  left: 10px;
  right: 11px;
  top: 36px;
}

.push-panel {
  height: 171px;
  padding: 0 7px;
}

.push-head {
  padding-top: 13px;
  font-size: 9px;
  line-height: 10px;
  text-align: center;
}

.push-summary {
  height: 93px;
  margin-top: 12px;
  font-size: 9px;
}

/* play bar */
.player {
  position: relative;
  z-index: 1;
  flex: none;
  height: 23px;
  margin: 0 1px -2px -1px;
  padding-top: 2px;
  background: var(--wire);
  border: 1px solid var(--wire-line);
  font-size: 5.500px;
  text-align: center;
}

.player-name {
  line-height: 7px;
}

.player-row {
  display: flex;
  align-items: center;
  gap: 3px;
  padding: 0 5px;
  font-size: 6px;
}

.player-play {
  flex: none;
  width: 9px;
  height: 9px;
  color: #9b9b9b;
}

.player-line {
  flex: 1;
  height: 1px;
  margin-right: 2px;
  background: #c2c2c2;
}

.player-line i {
  width: 54%;
  height: 1px;
  background: #8a8a8a;
}
```
